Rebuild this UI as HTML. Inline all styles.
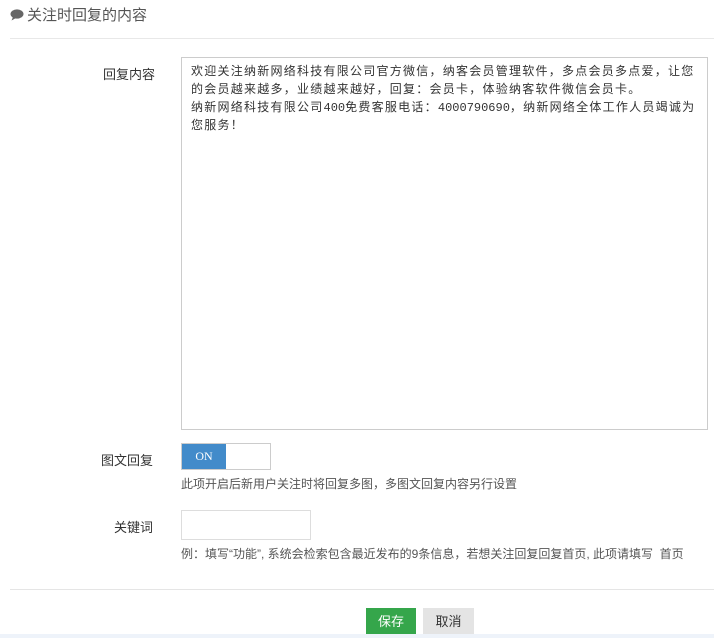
<!DOCTYPE html>
<html><head><meta charset="utf-8"><style>
body{margin:0;width:714px;height:638px;background:#fff;font-family:"Liberation Sans","Noto Sans CJK SC",sans-serif;font-size:12px;color:#333;position:relative;overflow:hidden}
.a{position:absolute}
.d{letter-spacing:0}
</style></head><body>
<svg class="a" style="left:10px;top:9px" width="14" height="12" viewBox="0 0 14 12"><ellipse cx="7" cy="5" rx="6.5" ry="4.6" fill="#666"/><path d="M3 8 L1.5 11.5 L6 9" fill="#666"/></svg>
<div class="a" style="left:27px;top:4px;font-size:15px;color:#555">关注时回复的内容</div>
<div class="a" style="left:10px;top:38px;width:704px;height:1px;background:#e8e8e8"></div>
<div class="a" style="left:103px;top:64px;font-size:13px">回复内容</div>
<div class="a" style="left:181px;top:57px;width:525px;height:371px;border:1px solid #ccc"></div>
<div class="a" style="left:191px;top:63px;line-height:18px;font-size:12px;color:#333;white-space:nowrap;letter-spacing:1.25px;font-family:'Liberation Mono','Noto Sans CJK SC',monospace">欢迎关注纳新网络科技有限公司官方微信，纳客会员管理软件，多点会员多点爱，让您<br>的会员越来越多，业绩越来越好，回复：会员卡，体验纳客软件微信会员卡。<br>纳新网络科技有限公司<span class="d">400</span>免费客服电话：<span class="d">4000790690</span>，纳新网络全体工作人员竭诚为<br>您服务！</div>
<div class="a" style="left:101px;top:450px;font-size:13px">图文回复</div>
<div class="a" style="left:181px;top:443px;width:88px;height:25px;border:1px solid #ccc"></div>
<div class="a" style="left:182px;top:444px;width:44px;height:25px;background:#428bca;color:#fff;line-height:25px;text-align:center;font-family:'Liberation Serif',serif;font-size:12px">ON</div>
<div class="a" style="left:181px;top:475px;color:#555">此项开启后新用户关注时将回复多图，多图文回复内容另行设置</div>
<div class="a" style="left:114px;top:517px;font-size:13px">关键词</div>
<div class="a" style="left:181px;top:510px;width:128px;height:28px;border:1px solid #ddd"></div>
<div class="a" style="left:181px;top:545px;color:#555;white-space:nowrap">例：填写“功能”, 系统会检索包含最近发布的9条信息，若想关注回复回复首页, 此项请填写&nbsp; 首页</div>
<div class="a" style="left:10px;top:589px;width:704px;height:1px;background:#e5e5e5"></div>
<div class="a" style="left:366px;top:608px;width:50px;height:27px;background:#35a64b;color:#fff;font-size:13px;line-height:27px;text-align:center">保存</div>
<div class="a" style="left:423px;top:608px;width:51px;height:27px;background:#e4e4e4;color:#333;font-size:13px;line-height:27px;text-align:center">取消</div>
<div class="a" style="left:0;top:634px;width:714px;height:4px;background:#eef3fa"></div>
</body></html>
